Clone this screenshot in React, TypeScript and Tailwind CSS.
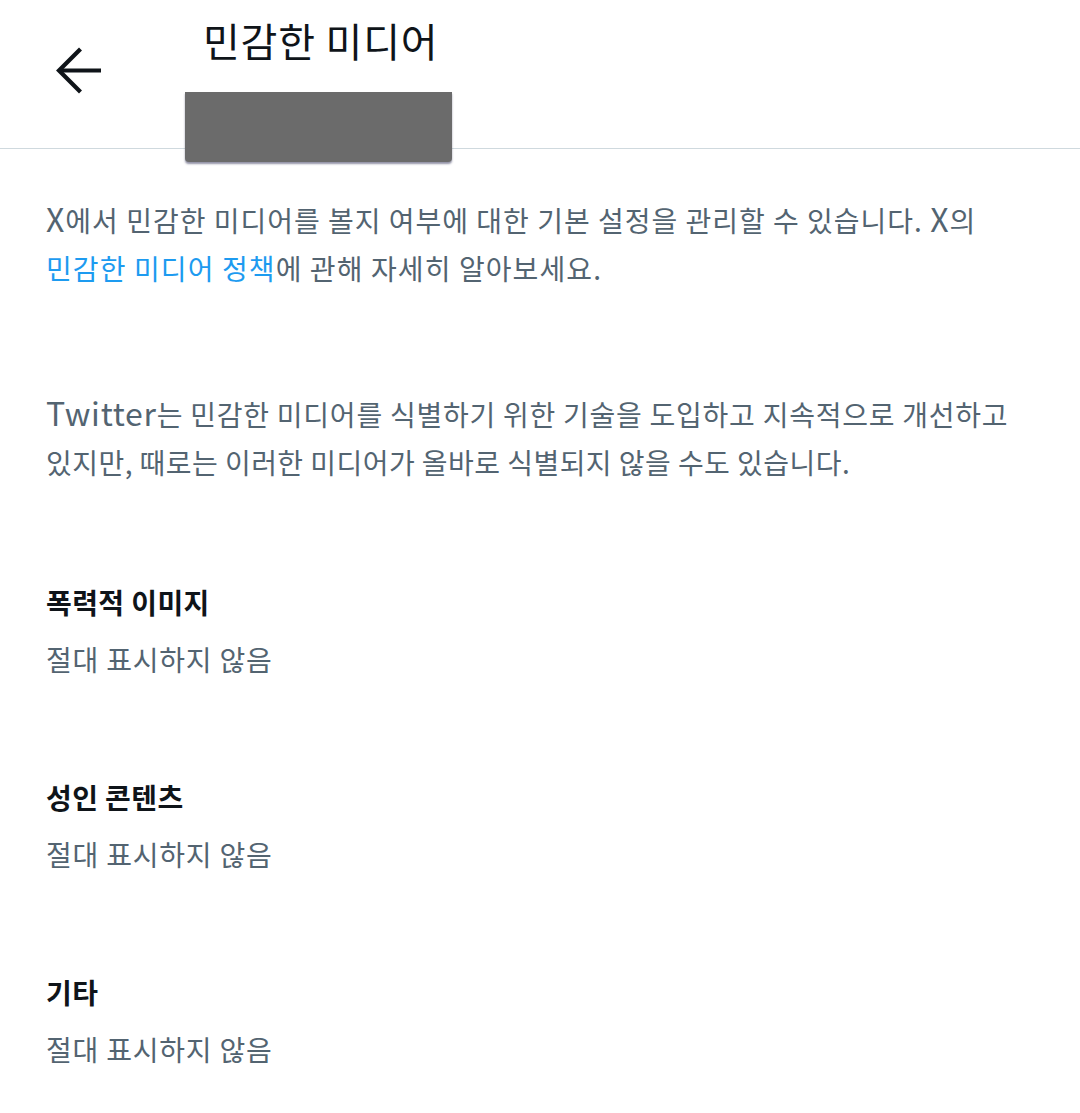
import React from 'react';

const font = { fontFamily: '"Noto Sans CJK KR", "Noto Sans", sans-serif' };

function Section({ title }: { title: string }) {
  return (
    <div className="flex flex-col">
      <div className="text-[28px] font-bold leading-[56px] tracking-[0.4px] text-[#0f1419]">{title}</div>
      <div className="text-[28px] leading-[58px] tracking-[0.8px] text-[#536471]">절대 표시하지 않음</div>
    </div>
  );
}

export default function App() {
  return (
    <div className="min-h-[1113px] w-[1080px] bg-white" style={font}>
      {/* Header */}
      <div className="relative flex h-[149px] items-start border-b border-[#cfd9de]">
        <div className="flex w-[185px] items-center pl-[55px] pt-[47px]">
          <svg width="48" height="47" viewBox="0 0 48 47" fill="none" stroke="#0f1419" strokeWidth="4.2" strokeLinecap="butt">
            <path d="M4 23.5 H46" />
            <path d="M25.5 2 L4 23.5 L25.5 45" />
          </svg>
        </div>
        <div className="pl-[18px] pt-[12px] text-[40px] leading-[56px] tracking-[0.8px] text-[#0f1419]">민감한 미디어</div>
        <div className="absolute left-[185px] top-[92px] h-[70px] w-[267px] rounded-b-[4px] bg-[#6b6b6b] shadow-[0_2px_2px_rgba(40,40,80,0.5)]" />
      </div>

      <div className="flex flex-col px-[46px] pt-[45px]">
        <p className="text-[28px] leading-[48px] text-[#536471]">
          <span className="block whitespace-nowrap tracking-[1px]">
            <span className="text-[32px]">X</span>에서 민감한 미디어를 볼지 여부에 대한 기본 설정을 관리할 수 있습니다. <span className="text-[32px]">X</span>의
          </span>
          <span className="block whitespace-nowrap tracking-[1.1px]">
            <span className="text-[#1d9bf0]">민감한 미디어 정책</span>에 관해 자세히 알아보세요.
          </span>
        </p>
        <p className="mt-[96px] text-[28px] leading-[48px] text-[#536471]">
          <span className="block whitespace-nowrap tracking-[0.75px]">
            <span className="text-[32px]">Twitter</span>는 민감한 미디어를 식별하기 위한 기술을 도입하고 지속적으로 개선하고
          </span>
          <span className="block whitespace-nowrap tracking-[0.45px]">
            있지만, 때로는 이러한 미디어가 올바로 식별되지 않을 수도 있습니다.
          </span>
        </p>
        <div className="mt-[88px] flex flex-col gap-[81px]">
          <Section title="폭력적 이미지" />
          <Section title="성인 콘텐츠" />
          <Section title="기타" />
        </div>
      </div>
    </div>
  );
}
